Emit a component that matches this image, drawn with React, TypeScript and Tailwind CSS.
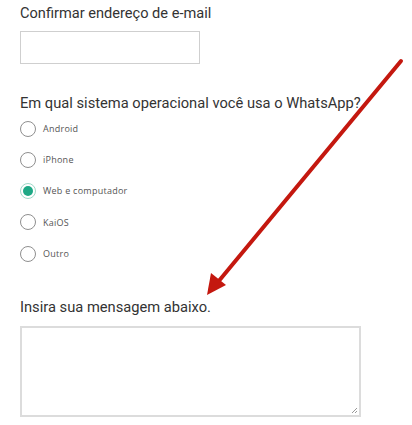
const options = ['Android', 'iPhone', 'Web e computador', 'KaiOS', 'Outro']

function Radio({ label, checked }: { label: string; checked?: boolean }) {
  return (
    <div className="flex items-center h-[31.25px]">
      <span
        className={`w-[16px] h-[16px] rounded-full border flex items-center justify-center ${
          checked ? 'border-[#9fd9c8]' : 'border-[#8f8f8f]'
        }`}
      >
        {checked && <span className="w-[10px] h-[10px] rounded-full bg-[#1ea885]" />}
      </span>
      <span className="ml-[7px] text-[9px] tracking-[0.25px] text-[#555] font-['Open_Sans',sans-serif]">
        {label}
      </span>
    </div>
  )
}

export default function App() {
  return (
    <div className="relative w-[412px] h-[425px] bg-white overflow-hidden font-['Roboto',sans-serif] text-[#333]">
      <div className="pl-[20px] pt-[3px]">
        <div className="text-[14.6px] leading-[20px]">Confirmar endereço de e-mail</div>
        <div className="mt-[8px] w-[180px] h-[33px] border border-[#cfcfcf]" />

        <div className="mt-[29px] text-[14.7px] leading-[20px]">
          Em qual sistema operacional você usa o WhatsApp?
        </div>
        <div>
          {options.map((o) => (
            <Radio key={o} label={o} checked={o === 'Web e computador'} />
          ))}
        </div>

        <div className="mt-[28px] text-[14.7px] leading-[20px]">Insira sua mensagem abaixo.</div>
        <div className="relative mt-[9px] w-[341px] h-[91px] border-2 border-[#dcdcdc]">
          <svg className="absolute right-[1px] bottom-[1px]" width="7" height="7" viewBox="0 0 7 7">
            <path d="M6 1L1 6M6 4L4 6" stroke="#999" strokeWidth="1" />
          </svg>
        </div>
      </div>

      <svg className="absolute left-0 top-0 pointer-events-none" width="412" height="425" viewBox="0 0 412 425">
        <line x1="401" y1="61" x2="218" y2="282" stroke="#c4180f" strokeWidth="4" strokeLinecap="round" />
        <polygon points="207,295 211,273 226,285" fill="#c4180f" />
      </svg>
    </div>
  )
}
